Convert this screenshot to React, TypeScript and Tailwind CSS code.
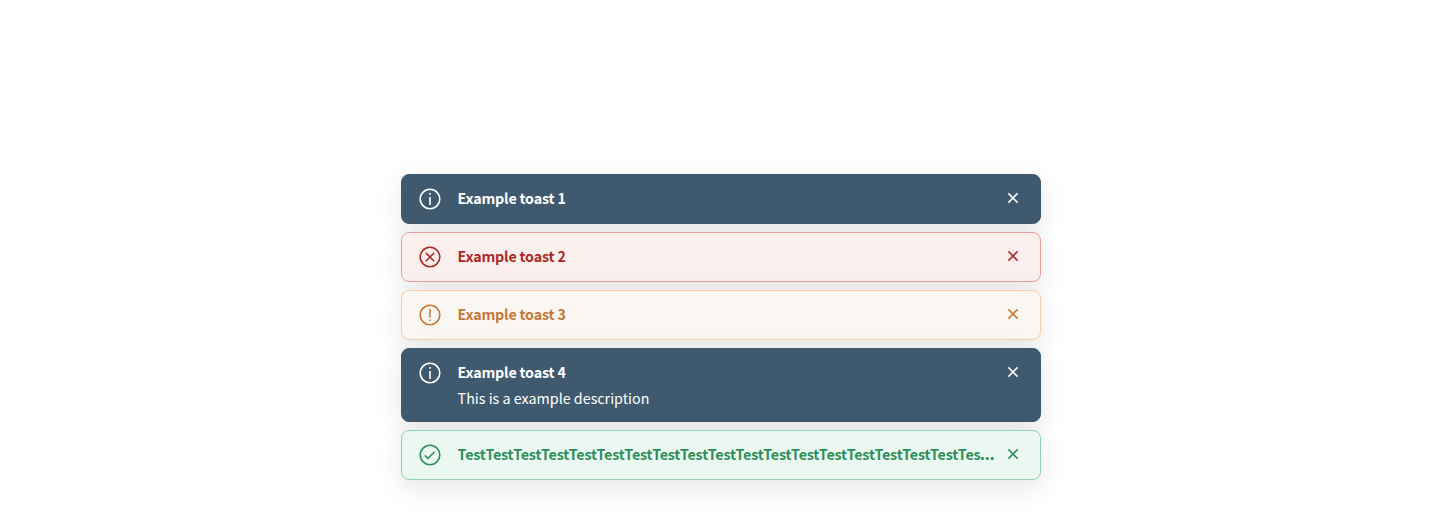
import type { ReactNode } from 'react';

type Kind = 'info' | 'error' | 'warning' | 'success';

interface ToastData {
  kind: Kind;
  title: string;
  description?: string;
}

const toasts: ToastData[] = [
  { kind: 'info', title: 'Example toast 1' },
  { kind: 'error', title: 'Example toast 2' },
  { kind: 'warning', title: 'Example toast 3' },
  { kind: 'info', title: 'Example toast 4', description: 'This is a example description' },
  { kind: 'success', title: 'Test'.repeat(24) },
];

const styles: Record<Kind, string> = {
  info: 'border-[#3f5a6f] bg-[#3f5a6f] text-white',
  error: 'border-[#eb9f9f] bg-[#fbefed] text-[#a92a28]',
  warning: 'border-[#f8ceaa] bg-[#faf6f1] text-[#c4783a]',
  success: 'border-[#90d2b0] bg-[#ebf8f1] text-[#2f8f5b]',
};

const glyphs: Record<Kind, ReactNode> = {
  info: (
    <>
      <path d="M12 10v8" />
      <path d="M12 6v1.8" />
    </>
  ),
  error: <path d="m7.8 7.8 8.4 8.4m0-8.4-8.4 8.4" />,
  warning: (
    <>
      <path d="M12 6v8.5" />
      <path d="M12 16.5v1.6" />
    </>
  ),
  success: <path d="m6.8 12.4 3.2 3 6.6-6.6" />,
};

function Toast({ kind, title, description }: ToastData) {
  return (
    <div
      className={`flex items-start rounded-lg border py-3 pr-[15px] pl-4 shadow-[0_8px_28px_rgba(0,0,0,0.1)] ${styles[kind]}`}
    >
      <svg viewBox="0 0 24 24" fill="none" stroke="currentColor" strokeWidth="1.6" className="size-6 shrink-0">
        <circle cx="12" cy="12" r="9.8" />
        {glyphs[kind]}
      </svg>
      <div className="ml-[15.6px] min-w-0 flex-1">
        <div className="h-6 truncate font-['Noto_Sans',sans-serif] text-[17px] leading-[22px] font-bold">
          <span className="font-['Noto_Sans_CJK_SC',sans-serif] text-[14.3px] tracking-[-0.19px]">{title}</span>
        </div>
        {description && <div className="h-6 text-[14.3px] leading-[26px]">{description}</div>}
      </div>
      <button aria-label="Close" className="ml-1 flex h-[22px] w-6 shrink-0 items-center justify-center">
        <svg viewBox="0 0 12 12" fill="none" stroke="currentColor" strokeWidth="1.55" className="size-3">
          <path d="m1.4 1.4 9.2 9.2m0-9.2-9.2 9.2" />
        </svg>
      </button>
    </div>
  );
}

export default function App() {
  return (
    <div className="flex h-[512px] flex-col items-center justify-end bg-white pb-8 font-['Noto_Sans_CJK_SC',sans-serif]">
      <div className="ml-px flex w-[640px] flex-col gap-2">
        {toasts.map((toast, index) => (
          <Toast key={index} {...toast} />
        ))}
      </div>
    </div>
  );
}
